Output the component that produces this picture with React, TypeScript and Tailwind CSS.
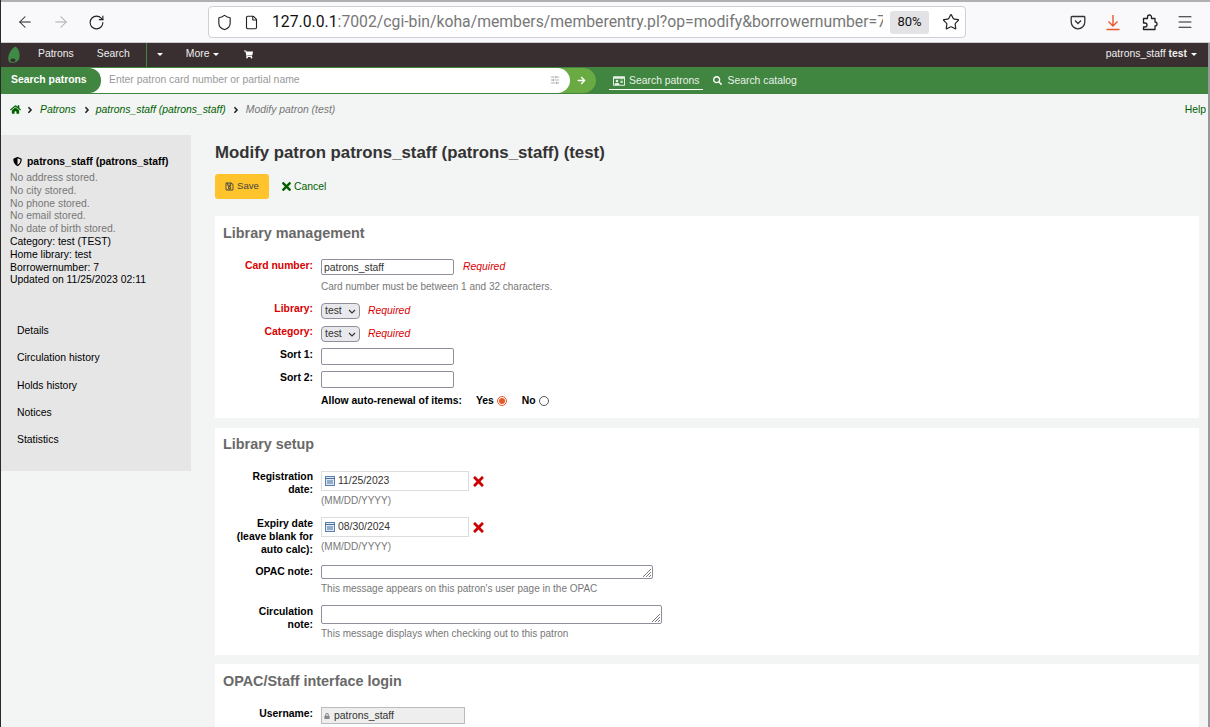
import React from 'react';
import { ArrowLeft, ArrowRight, RotateCw, Shield, File, Star, Menu, SlidersHorizontal } from 'lucide-react';
import { FaHome, FaRegSave, FaTimes, FaSearch, FaShoppingCart, FaArrowRight, FaShieldAlt, FaLock, FaAngleRight, FaRegIdCard } from 'react-icons/fa';

const Caret = () => <span className="inline-block ml-1 align-middle w-0 h-0 border-x-[3px] border-x-transparent border-t-[3px] border-t-white" />;

const Row = ({ label, red, className, labelClass, children }: { label: React.ReactNode; red?: boolean; className?: string; labelClass?: string; children: React.ReactNode }) => (
    <div className={`flex ${className ?? ''}`}>
        <div className={`w-[90px] mr-2 text-right font-bold leading-[13px] shrink-0 ${red ? 'text-[#d90000]' : 'text-black'} ${labelClass ?? ''}`}>{label}</div>
        <div className="flex-1 min-w-0">{children}</div>
    </div>
);

const Hint = ({ children }: { children: React.ReactNode }) => <div className="text-[#777] text-[10px] leading-[13px]">{children}</div>;

const Required = () => <span className="italic text-[#d90000] ml-2">Required</span>;

const Select = () => (
    <span className="inline-flex items-center justify-between w-[39px] h-[16px] pl-[3px] pr-[3px] border border-[#8f8f9d] rounded-[4px] bg-[#e9e9ed] text-[#333]">
        test
        <svg width="8" height="5" viewBox="0 0 8 5"><path d="M1 1l3 3 3-3" fill="none" stroke="#333" strokeWidth="1.1" /></svg>
    </span>
);

const DateField = ({ value }: { value: string }) => (
    <div className="flex items-center">
        <div className="flex items-center w-[148px] h-[20px] border border-[#ddd] pl-[3px] text-[#333] bg-white">
            <svg width="10" height="10" viewBox="0 0 10 10" className="mr-[3px]">
                <rect x="0.5" y="0.5" width="9" height="9" fill="#dfe9f5" stroke="#5a7fa8" />
                <path d="M0 2.5h10M2 5h6M2 7h6" stroke="#48709c" />
            </svg>
            {value}
        </div>
        <FaTimes size={15} className="ml-[2px] text-[#cc0000]" />
    </div>
);

const Resizer = () => (
    <svg width="11" height="11" viewBox="0 0 11 11" className="absolute right-0 bottom-0">
        <path d="M10 2L2 10M10 5L5 10M10 8L8 10" stroke="#777" strokeWidth="1" />
    </svg>
);

const SectionTitle = ({ children }: { children: React.ReactNode }) => (
    <h2 className="text-[14.4px] leading-[17px] font-bold text-[#696969]">{children}</h2>
);

export default function App() {
    return (
        <div className="w-[1210px] h-[727px] overflow-hidden bg-[#f3f4f4] border-l border-l-[#2a2a2a] text-[10.4px] font-['Liberation_Sans',Arial,sans-serif] relative">
            {/* browser chrome */}
            <div className="h-[43px] bg-[#f9f9fb] border-t-2 border-t-[#b0b0b0] border-b border-b-[#ccc] flex items-center text-[#222] font-['Roboto',sans-serif]">
                <ArrowLeft size={18} strokeWidth={1.4} className="ml-[15px]" />
                <ArrowRight size={18} strokeWidth={1.4} className="ml-[18px] text-[#aaa]" />
                <RotateCw size={17} strokeWidth={1.6} className="ml-[18px]" />
                <div className="ml-[103px] w-[758px] h-[32px] bg-white border border-[#d0d0d4] rounded-[4px] flex items-center">
                    <Shield size={17} strokeWidth={1.6} className="ml-[7px]" />
                    <File size={15} strokeWidth={1.8} className="ml-[11px]" />
                    <span className="ml-[13px] text-[15.75px] whitespace-nowrap overflow-hidden w-[611px] text-[#777]"><span className="text-[#111]">127.0.0.1</span>:7002/cgi-bin/koha/members/memberentry.pl?op=modify&amp;borrowernumber=7</span>
                    <span className="ml-[7px] w-[39px] h-[23px] bg-[#e3e3e6] rounded-[3px] text-[13px] flex items-center justify-center text-[#111]">80%</span>
                    <Star size={18} strokeWidth={1.6} className="ml-[13px]" />
                </div>
                <svg width="16" height="16" viewBox="0 0 16 16" className="ml-[104px]" fill="none" stroke="#333" strokeWidth="1.3"><path d="M2 2.5h12a.8.8 0 0 1 .8.8V8a6.8 6.8 0 0 1-13.6 0V3.3a.8.8 0 0 1 .8-.8z" /><path d="M5 6.5l3 3 3-3" /></svg>
                <svg width="16" height="17" viewBox="0 0 16 17" className="ml-[19px]" fill="none" stroke="#e8582a" strokeWidth="1.4"><path d="M8 1v10.5M3.5 7.5L8 12l4.5-4.5M1.5 15.5h13" /></svg>
                <svg width="16" height="18" viewBox="0 0 16 18" className="ml-[21px]" fill="none" stroke="#222" strokeWidth="1.3" strokeLinejoin="round"><path d="M5.5 5.5h-4V10H3a2 2 0 0 1 0 4H1.5v2.5H13V13a2 2 0 0 0 0-4V5.5H9.5V4a2 2 0 0 0-4 0z" /></svg>
                <Menu size={18} strokeWidth={1.4} className="ml-[18px]" />
            </div>

            {/* top nav */}
            <div className="h-[24px] bg-[#392e30] flex items-center text-[#eee] pr-[13px] pb-[2px]">
                <svg width="14" height="18" viewBox="0 0 13 17" className="ml-[6px] mt-[2px]"><path d="M7.5 0.5C11 2 12.5 7 11.5 11.5 10.5 15.5 5 17 2 15 -0.5 12 2 4 7.5 0.5z" fill="#3f8a45" /><ellipse cx="5.5" cy="13.5" rx="2.5" ry="1.6" fill="#392e30" /></svg>
                <span className="ml-[17px]">Patrons</span>
                <span className="ml-[23px]">Search</span>
                <span className="ml-[16px] w-px h-[24px] mt-[2px] bg-[#408540]" />
                <span className="ml-[6px] w-[8px]"><Caret /></span>
                <span className="ml-[25px]">More<Caret /></span>
                <FaShoppingCart size={9} className="ml-[25px] text-white" />
                <span className="ml-auto">patrons_staff <b>test</b><Caret /></span>
            </div>

            {/* search bar */}
            <div className="h-[27px] bg-[#408540] flex items-center text-white">
                <div className="flex items-center h-[25px] -mt-[1px]">
                    <div className="h-full w-[100px] bg-[#408540] rounded-r-[12px] flex items-center pl-[10px] font-bold z-10 -mr-[12px] whitespace-nowrap">Search patrons</div>
                    <div className="h-full w-[481px] bg-white rounded-r-[13px] flex items-center pl-[20px] text-[#999] z-[5] -mr-[12px] relative">
                        Enter patron card number or partial name
                        <SlidersHorizontal size={10} strokeWidth={1.6} className="absolute right-[10px] text-[#888]" />
                    </div>
                    <div className="h-full w-[38px] bg-[#6aaa42] rounded-r-[13px] flex items-center justify-end pr-[10px]">
                        <FaArrowRight size={9} />
                    </div>
                </div>
                <div className="ml-[13px] flex items-center h-[17px] px-[4px] border-b border-b-white text-[#e8f2e8] mt-[1px]">
                    <FaRegIdCard size={12} className="mr-[4px]" />
                    Search patrons
                </div>
                <FaSearch size={9} className="ml-[10px]" />
                <span className="ml-[5px] text-[#e8f2e8]">Search catalog</span>
            </div>

            {/* breadcrumb */}
            <div className="h-[28px] flex items-center pl-[9px] pr-[4px] pt-[3px] text-[#006100]">
                <FaHome size={11} />
                <FaAngleRight size={10} className="ml-[4px] text-[#222]" />
                <i className="ml-[5px]">Patrons</i>
                <FaAngleRight size={10} className="ml-[6px] text-[#222]" />
                <i className="ml-[4px]">patrons_staff (patrons_staff)</i>
                <FaAngleRight size={10} className="ml-[5px] text-[#222]" />
                <i className="ml-[5px] text-[#777]">Modify patron (test)</i>
                <span className="ml-auto">Help</span>
            </div>

            <div className="flex items-start mt-[13px]">
                {/* patron sidebar */}
                <aside className="w-[190px] h-[336px] bg-[#e6e6e6] shrink-0 pl-[9px] pt-[20px] text-[#000]">
                    <div className="flex items-center font-bold ml-[3px] h-[13px]">
                        <FaShieldAlt size={9} className="mr-[5px]" />
                        patrons_staff (patrons_staff)
                    </div>
                    <div className="mt-[4px] leading-[12.8px]">
                        <div className="text-[#777]">No address stored.</div>
                        <div className="text-[#777]">No city stored.</div>
                        <div className="text-[#777]">No phone stored.</div>
                        <div className="text-[#777]">No email stored.</div>
                        <div className="text-[#777]">No date of birth stored.</div>
                        <div>Category: test (TEST)</div>
                        <div>Home library: test</div>
                        <div>Borrowernumber: 7</div>
                        <div>Updated on 11/25/2023 02:11</div>
                    </div>
                    <nav className="mt-[37px] ml-[7px] flex flex-col gap-[14.2px] leading-[13px]">
                        <span>Details</span>
                        <span>Circulation history</span>
                        <span>Holds history</span>
                        <span>Notices</span>
                        <span>Statistics</span>
                    </nav>
                </aside>

                {/* form */}
                <main className="ml-[24px] w-[984px] shrink-0">
                    <h1 className="text-[16.8px] leading-[20px] font-bold text-[#333] mt-[8px]">Modify patron patrons_staff (patrons_staff) (test)</h1>
                    <div className="flex items-center mt-[11px]">
                        <span className="w-[54px] h-[25px] bg-[#ffc32b] rounded-[3px] flex items-center justify-center text-[#444] text-[9.6px]">
                            <FaRegSave size={9} className="mr-[3px]" />Save
                        </span>
                        <span className="ml-[11px] text-[#006100] flex items-center">
                            <FaTimes size={13} className="mr-[1px]" />Cancel
                        </span>
                    </div>

                    <section className="mt-[17px] bg-white h-[202px] pl-[8px] pt-[9px]">
                        <SectionTitle>Library management</SectionTitle>
                        <Row label="Card number:" red className="mt-[17px]">
                            <div className="flex items-center h-[16px]">
                                <div className="w-[133px] h-[16px] border border-[#8f8f9d] rounded-[2px] pl-[2px] leading-[15px] text-[#333]">patrons_staff</div>
                                <span className="ml-[1px]"><Required /></span>
                            </div>
                            <div className="mt-[5px]"><Hint>Card number must be between 1 and 32 characters.</Hint></div>
                        </Row>
                        <Row label="Library:" red className="mt-[9px]">
                            <div className="flex items-center mt-[1px]"><Select /><Required /></div>
                        </Row>
                        <Row label="Category:" red className="mt-[6px]">
                            <div className="flex items-center mt-[1px]"><Select /><Required /></div>
                        </Row>
                        <Row label="Sort 1:" className="mt-[6px]">
                            <div className="w-[133px] h-[17px] border border-[#8f8f9d] rounded-[2px]" />
                        </Row>
                        <Row label="Sort 2:" className="mt-[6px]">
                            <div className="w-[133px] h-[17px] border border-[#8f8f9d] rounded-[2px]" />
                        </Row>
                        <div className="flex items-center ml-[98px] mt-[6px] font-bold text-black h-[13px]">
                            Allow auto-renewal of items:
                            <span className="ml-[14px]">Yes</span>
                            <span className="ml-[3px] w-[10px] h-[10px] rounded-full border border-[#e8582a] flex items-center justify-center"><span className="w-[6px] h-[6px] rounded-full bg-[#e8582a]" /></span>
                            <span className="ml-[15px]">No</span>
                            <span className="ml-[3px] w-[10px] h-[10px] rounded-full border border-[#555]" />
                        </div>
                    </section>

                    <section className="mt-[10px] bg-white h-[227px] pl-[8px] pt-[8px]">
                        <SectionTitle>Library setup</SectionTitle>
                        <Row label={<>Registration<br />date:</>} className="mt-[18px]" labelClass="-mt-[1px]">
                            <DateField value="11/25/2023" />
                            <div className="mt-[3px]"><Hint>(MM/DD/YYYY)</Hint></div>
                        </Row>
                        <Row label={<>Expiry date<br />(leave blank for<br />auto calc):</>} className="mt-[10px]" labelClass="leading-[12.5px]">
                            <DateField value="08/30/2024" />
                            <div className="mt-[3px]"><Hint>(MM/DD/YYYY)</Hint></div>
                        </Row>
                        <Row label="OPAC note:" className="mt-[9px]">
                            <div className="relative w-[332px] h-[14px] border border-[#8f8f9d] rounded-[2px]"><Resizer /></div>
                            <div className="mt-[3px]"><Hint>This message appears on this patron's user page in the OPAC</Hint></div>
                        </Row>
                        <Row label={<>Circulation<br />note:</>} className="mt-[10px]">
                            <div className="relative w-[341px] h-[19px] border border-[#8f8f9d] rounded-[2px]"><Resizer /></div>
                            <div className="mt-[3px]"><Hint>This message displays when checking out to this patron</Hint></div>
                        </Row>
                    </section>

                    <section className="mt-[9px] bg-white h-[80px] pl-[8px] pt-[9px]">
                        <SectionTitle>OPAC/Staff interface login</SectionTitle>
                        <Row label="Username:" className="mt-[17px]">
                            <div className="flex items-center w-[144px] h-[17px] border border-[#bbb] bg-[#eee] pl-[2px] text-[#333]">
                                <FaLock size={6} className="mr-[4px] text-[#888]" />patrons_staff
                            </div>
                        </Row>
                    </section>
                </main>
            </div>

            {/* page scrollbar */}
            <div className="absolute right-0 top-[43px] w-[2px] h-[684px] bg-[#999]" />
        </div>
    );
}
